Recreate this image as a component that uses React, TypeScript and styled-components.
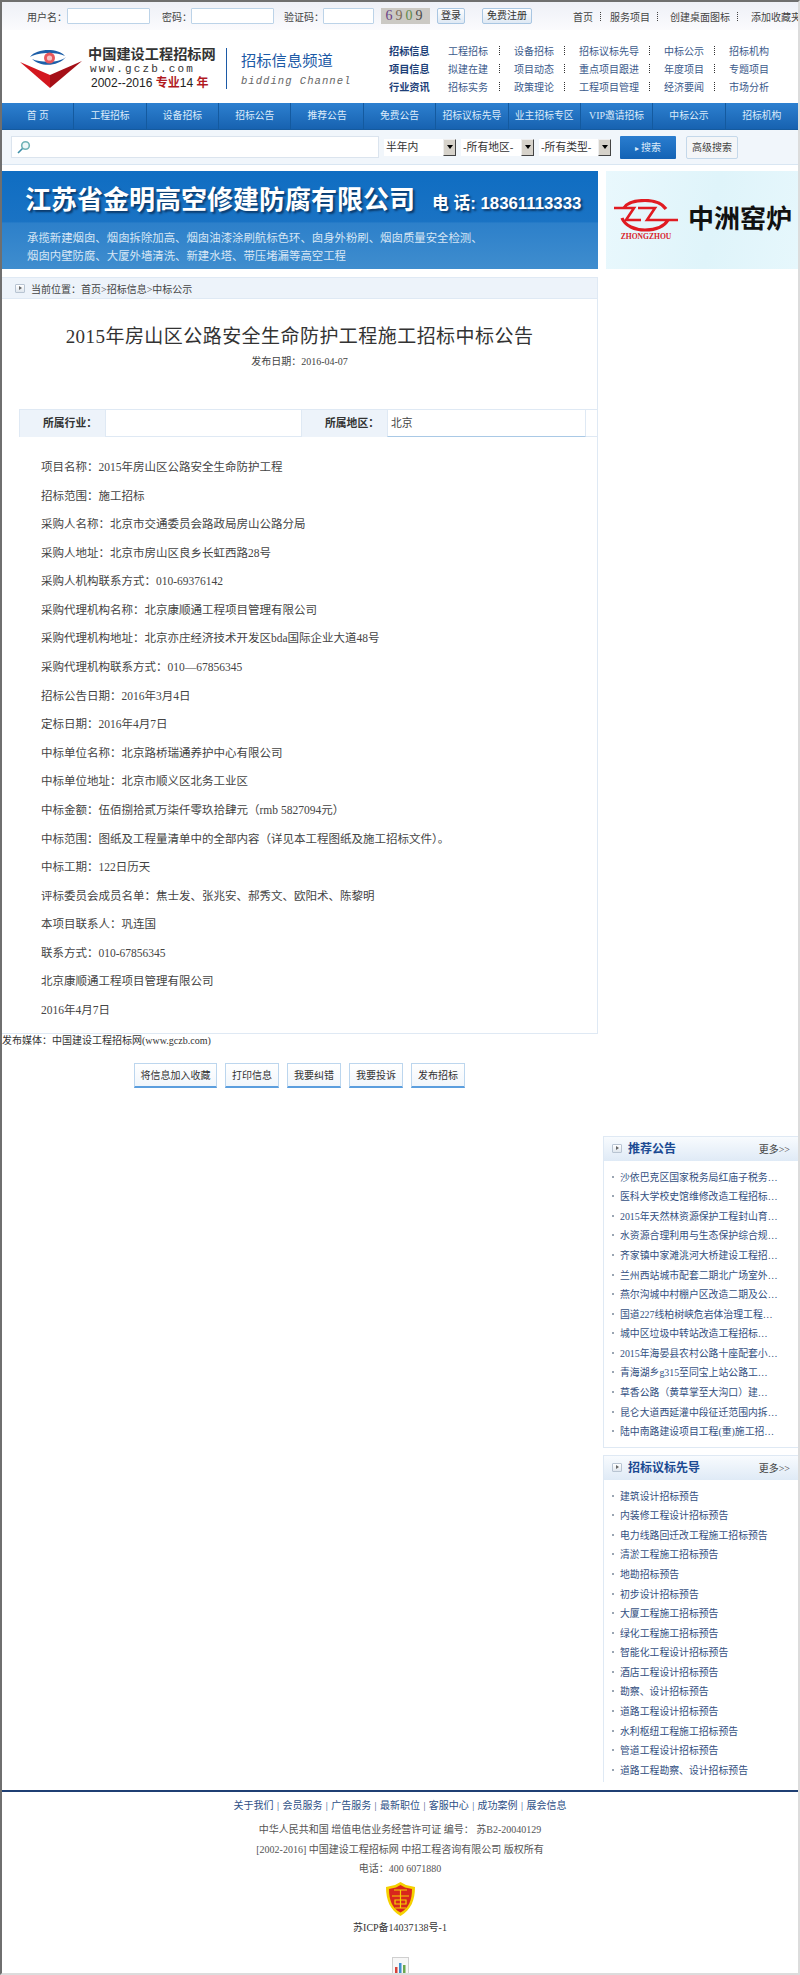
import React from 'react';
import styled, { createGlobalStyle } from 'styled-components';

const FONT = '"Liberation Serif", "Noto Sans CJK SC", serif';

const GlobalStyle = createGlobalStyle`
  html, body {
    margin: 0;
    padding: 0;
    background: #fff;
    font-family: ${FONT};
    color: #444;
  }
`;

const Page = styled.div`
  width: 800px;
  height: 1975px;
  box-sizing: border-box;
  overflow: hidden;
  border-top: 2px solid #6f6f6f;
  border-left: 2px solid #6f6f6f;
  border-right: 2px solid #dcdcdc;
  border-bottom: 2px solid #dcdcdc;
`;

const LoginBar = styled.div`
  height: 28px;
  display: flex;
  align-items: center;
  padding-left: 25px;
  background: linear-gradient(#eef0f7, #fbfbfd);
  font-size: 10px;
  color: #444;
  white-space: nowrap;
`;

const LoginLabel = styled.span<{ $w: number }>`
  width: ${(p) => p.$w}px;
  flex: none;
`;

const LoginInput = styled.input<{ $w: number; $after: number }>`
  width: ${(p) => p.$w}px;
  height: 16px;
  flex: none;
  box-sizing: border-box;
  padding: 0;
  margin-right: ${(p) => p.$after}px;
  background: #fff;
  border: 1px solid #bcd3e8;
  border-radius: 1px;
`;

const Captcha = styled.span`
  width: 49px;
  height: 16px;
  flex: none;
  margin-right: 7px;
  background: #cbc9c4;
  font-size: 14px;
  letter-spacing: 3px;
  line-height: 16px;
  text-align: center;
`;

const CaptchaDigit = styled.span<{ $c: string }>`
  color: ${(p) => p.$c};
`;

const LoginButton = styled.span<{ $w: number; $after: number }>`
  width: ${(p) => p.$w}px;
  height: 16px;
  flex: none;
  box-sizing: border-box;
  margin-right: ${(p) => p.$after}px;
  border: 1px solid #a9c6e2;
  border-radius: 2px;
  background: linear-gradient(#fdfdfe, #dfe9f4);
  line-height: 14px;
  text-align: center;
  color: #333;
`;

const QuickLink = styled.span`
  flex: none;
`;

const QuickSep = styled.i<{ $after: number }>`
  width: 1px;
  height: 9px;
  flex: none;
  margin: 0 ${(p) => p.$after}px 0 7px;
  border-left: 1px dotted #444;
`;

const LogoBand = styled.div`
  height: 73px;
  display: flex;
  align-items: flex-start;
  background: #fff;
`;

const LogoMark = styled.svg`
  width: 68px;
  height: 44px;
  flex: none;
  margin: 17px 0 0 13px;
`;

const SiteName = styled.div`
  width: 138px;
  flex: none;
  margin: 16px 0 0 5px;
`;

const SiteTitle = styled.div`
  font-size: 14.2px;
  font-weight: 700;
  line-height: 17px;
  color: #333;
  white-space: nowrap;
`;

const SiteUrl = styled.div`
  margin-left: 2px;
  font: 11px/13px "Liberation Mono", monospace;
  letter-spacing: 2.15px;
  color: #333;
`;

const SiteYears = styled.div`
  margin-left: 3px;
  font: 12px/15px "Liberation Sans", "Noto Sans CJK SC", sans-serif;
  color: #222;
  white-space: nowrap;
  b {
    color: #b11a1f;
  }
`;

const ChannelDivider = styled.div`
  width: 1px;
  height: 41px;
  flex: none;
  margin-top: 18px;
  background: #1c5aa6;
`;

const Channel = styled.div`
  width: 148px;
  flex: none;
  margin: 21px 0 0 14px;
`;

const ChannelTitle = styled.div`
  font-size: 15.3px;
  line-height: 20px;
  color: #1c5aa6;
`;

const ChannelSub = styled.div`
  margin-top: 3px;
  font: italic 10.6px/14px "Liberation Mono", monospace;
  letter-spacing: 1px;
  color: #666;
`;

const LinkGrid = styled.div`
  display: grid;
  grid-template-columns: 59px 66px 65px 85px 65px auto;
  grid-auto-rows: 18px;
  margin-top: 11px;
  font-size: 10px;
  align-items: center;
`;

const LinkHead = styled.b`
  font-size: 10.2px;
  color: #1d3f78;
`;

const LinkCell = styled.span`
  display: flex;
  justify-content: space-between;
  align-items: center;
  padding-right: 13px;
  color: #3b5a8c;
  white-space: nowrap;
  &:last-child {
    padding-right: 0;
  }
`;

const LinkSep = styled.i`
  width: 1px;
  height: 9px;
  border-left: 1px dotted #333;
`;

const Nav = styled.div`
  height: 27px;
  display: grid;
  grid-template-columns: repeat(11, 1fr);
  background: linear-gradient(#2d80d0, #1762b0);
  border-bottom: 1px solid #155a9e;
  box-sizing: border-box;
`;

const NavItem = styled.div`
  border-right: 1px solid #145a9f;
  font-size: 9.8px;
  line-height: 26px;
  text-align: center;
  color: #dcebfa;
  white-space: nowrap;
  &:last-child {
    border-right: 0;
  }
`;

const SearchBar = styled.div`
  height: 35px;
  box-sizing: border-box;
  display: flex;
  align-items: center;
  padding-left: 9px;
  background: #f1f6fb;
  border-bottom: 1px solid #d9e6f2;
`;

const SearchBox = styled.div`
  width: 368px;
  height: 22px;
  flex: none;
  box-sizing: border-box;
  display: flex;
  align-items: center;
  padding-left: 4px;
  margin-right: 5px;
  background: #fff;
  border: 1px solid #dbe4ee;
`;

const SelectBox = styled.div<{ $w: number; $after: number }>`
  width: ${(p) => p.$w}px;
  height: 17px;
  flex: none;
  box-sizing: border-box;
  display: flex;
  justify-content: space-between;
  margin-right: ${(p) => p.$after}px;
  padding-left: 2px;
  background: #fff;
  font-size: 10.8px;
  line-height: 16px;
  color: #333;
  white-space: nowrap;
`;

const SelectArrow = styled.span`
  width: 13px;
  height: 17px;
  flex: none;
  box-sizing: border-box;
  display: flex;
  align-items: center;
  justify-content: center;
  background: #d6d2ca;
  border: 1px solid;
  border-color: #eee #444 #444 #eee;
  &::after {
    content: '';
    border: 3px solid transparent;
    border-top: 4px solid #000;
    border-bottom: 0;
  }
`;

const SearchButton = styled.div`
  width: 56px;
  height: 23px;
  flex: none;
  margin: 0 10px 0 2px;
  border-radius: 1px;
  background: linear-gradient(#2a7dcf, #1363b5);
  font-size: 10px;
  line-height: 24px;
  text-align: center;
  color: #dcebfa;
  &::before {
    content: '▸ ';
    font-size: 8px;
  }
`;

const AdvancedButton = styled.div`
  width: 52px;
  height: 23px;
  flex: none;
  box-sizing: border-box;
  border: 1px solid #c4d8ea;
  border-radius: 2px;
  background: #f4f6f8;
  font-size: 10px;
  line-height: 22px;
  text-align: center;
  color: #444;
`;

const Main = styled.div`
  display: flex;
  height: 1619px;
  margin-top: 6px;
`;

const LeftColumn = styled.div`
  width: 596px;
  flex: none;
`;

const RightColumn = styled.div`
  width: 195px;
  flex: none;
  margin-left: 5px;
`;

const Banner = styled.div`
  height: 98px;
  margin-bottom: 8px;
  box-sizing: border-box;
  padding: 10px 0 0 23px;
  background: linear-gradient(#0f6dc2 0, #1a73c4 52%, #2d80ca 53%, #3f8dce 100%);
  color: #fff;
`;

const BannerHead = styled.div`
  display: flex;
  align-items: baseline;
  white-space: nowrap;
  text-shadow: 2px 2px 2px #0b3a6b;
`;

const BannerName = styled.span`
  font-size: 26px;
  font-weight: 700;
  line-height: 40px;
`;

const BannerPhone = styled.span`
  margin-left: 17px;
  font: 700 16.8px/40px "Liberation Sans", "Noto Sans CJK SC", sans-serif;
`;

const BannerText = styled.div`
  margin: 5px 0 0 2px;
  font-size: 11.4px;
  line-height: 18px;
  color: #d6e6f5;
  white-space: nowrap;
`;

const Crumbs = styled.div`
  height: 22px;
  box-sizing: border-box;
  display: flex;
  align-items: center;
  padding-left: 13px;
  background: #edf3fa;
  border: 1px solid #dfe9f4;
  border-width: 1px 1px 1px 0;
  font-size: 10px;
  color: #444;
`;

const ArrowIcon = styled.span`
  width: 10px;
  height: 9px;
  flex: none;
  box-sizing: border-box;
  display: inline-flex;
  align-items: center;
  justify-content: center;
  margin-right: 6px;
  background: linear-gradient(#fff, #dfe6ee);
  border: 1px solid #b8c4d2;
  border-radius: 1px;
  &::after {
    content: '';
    border: 2px solid transparent;
    border-left: 3px solid #666;
    border-right: 0;
  }
`;

const Article = styled.div`
  box-sizing: border-box;
  height: 735px;
  padding-top: 23px;
  border-right: 1px solid #dfe9f4;
  border-bottom: 1px solid #dfe9f4;
`;

const Title = styled.h1`
  margin: 0;
  font-size: 19px;
  font-weight: 400;
  line-height: 30px;
  letter-spacing: 0.45px;
  text-align: center;
  color: #333;
`;

const PublishDate = styled.div`
  margin-top: 2px;
  font-size: 10px;
  line-height: 16px;
  text-align: center;
  color: #444;
`;

const MetaTable = styled.div`
  display: grid;
  grid-template-columns: 85px 197px 85px 199px;
  height: 28px;
  margin: 39px 0 0 17px;
  box-sizing: border-box;
  border: 1px solid #dfe9f4;
  border-right: 0;
`;

const MetaLabel = styled.b`
  background: #edf3fa;
  font-size: 10.8px;
  line-height: 26px;
  text-align: right;
  padding-right: 8px;
  color: #333;
`;

const MetaValue = styled.span<{ $underline?: boolean }>`
  padding-left: 3px;
  font-size: 10.8px;
  line-height: 26px;
  border-left: 1px solid #dfe9f4;
  border-right: 1px solid #dfe9f4;
  border-bottom: ${(p) => (p.$underline ? '1px solid #a9c9e6' : '0')};
  color: #444;
`;

const Body = styled.div`
  margin: 16px 0 0 39px;
`;

const Para = styled.p`
  margin: 0;
  font-size: 11.5px;
  line-height: 28.58px;
  color: #444;
  white-space: nowrap;
`;

const SourceLine = styled.div`
  font-size: 10px;
  line-height: 14px;
  color: #333;
`;

const ActionRow = styled.div`
  display: flex;
  gap: 8px;
  margin: 15px 0 0 132px;
`;

const ActionButton = styled.div<{ $w: number }>`
  width: ${(p) => p.$w}px;
  height: 25px;
  box-sizing: border-box;
  background: linear-gradient(#fff, #f1f6fb);
  border: 1px solid #bcd6ee;
  border-bottom: 2px solid #5b9ede;
  font-size: 10px;
  line-height: 23px;
  text-align: center;
  color: #333;
`;

const SideAd = styled.div`
  width: 192px;
  height: 98px;
  margin-left: 3px;
  display: flex;
  flex-direction: column;
  justify-content: center;
  background: linear-gradient(100deg, #e9f8fd, #dff4fa 55%, #e6f7fc);
`;

const AdRow = styled.div`
  display: flex;
  align-items: center;
  padding-left: 8px;
`;

const AdLogo = styled.div`
  width: 64px;
  flex: none;
  text-align: center;
  font-size: 7.6px;
  font-weight: 700;
  line-height: 9px;
  color: #d8232a;
`;

const AdMark = styled.svg`
  display: block;
  width: 64px;
  height: 33px;
`;

const AdName = styled.div`
  margin-left: 10px;
  font-size: 26px;
  font-weight: 700;
  line-height: 30px;
  color: #111;
  white-space: nowrap;
`;

const SideBox = styled.div<{ $top: number; $h: number; $closed?: boolean }>`
  height: ${(p) => p.$h}px;
  box-sizing: border-box;
  margin-top: ${(p) => p.$top}px;
  border: 1px solid #dfe9f4;
  border-right: 0;
  border-bottom: ${(p) => (p.$closed ? '1px solid #dfe9f4' : '0')};
`;

const SideHead = styled.div`
  height: 24px;
  box-sizing: border-box;
  display: flex;
  align-items: center;
  padding: 0 8px 2px 8px;
  background: linear-gradient(#f8fbfe, #dfeaf6);
`;

const SideTitle = styled.b`
  flex: 1;
  font-size: 12px;
  color: #1b4a92;
`;

const SideMore = styled.span`
  font-size: 10px;
  color: #444;
`;

const SideList = styled.ul`
  list-style: none;
  margin: 0;
  padding: 6px 0 0 8px;
`;

const SideItem = styled.li`
  display: flex;
  align-items: center;
  height: 19.57px;
  font-size: 9.85px;
  color: #33507f;
  white-space: nowrap;
  &::before {
    content: '';
    width: 2px;
    height: 2px;
    margin-right: 6px;
    background: #9aa5b2;
  }
`;

const Footer = styled.div`
  border-top: 2px solid #1f3f73;
  padding-top: 6px;
  text-align: center;
  font-size: 10px;
  color: #555;
`;

const FooterLinks = styled.div`
  line-height: 16px;
  margin-bottom: 6px;
  word-spacing: 0.9px;
  color: #2d4f86;
`;

const FooterLine = styled.div`
  line-height: 19.5px;
`;

const FooterBadge = styled.svg`
  display: block;
  width: 29px;
  height: 34px;
  margin: 3px auto 4px;
`;

const FooterIcp = styled.div`
  line-height: 16px;
  color: #333;
`;

const StatIcon = styled.svg`
  display: block;
  width: 17px;
  height: 17px;
  margin: 21px auto 0;
`;

const captchaDigits = [
  { d: '6', c: '#6a3f86' },
  { d: '9', c: '#7a6a55' },
  { d: '0', c: '#5f8a4a' },
  { d: '9', c: '#4a4a4a' },
];

const quickLinks = [
  { text: '首页', after: 8 },
  { text: '服务项目', after: 11 },
  { text: '创建桌面图标', after: 12 },
  { text: '添加收藏夹', after: 0 },
];

const linkRows = [
  ['招标信息', '工程招标', '设备招标', '招标议标先导', '中标公示', '招标机构'],
  ['项目信息', '拟建在建', '项目动态', '重点项目跟进', '年度项目', '专题项目'],
  ['行业资讯', '招标实务', '政策理论', '工程项目管理', '经济要闻', '市场分析'],
];

const navItems = [
  '首 页', '工程招标', '设备招标', '招标公告', '推荐公告', '免费公告',
  '招标议标先导', '业主招标专区', 'VIP邀请招标', '中标公示', '招标机构',
];

const paragraphs = [
  '项目名称：2015年房山区公路安全生命防护工程',
  '招标范围：施工招标',
  '采购人名称：北京市交通委员会路政局房山公路分局',
  '采购人地址：北京市房山区良乡长虹西路28号',
  '采购人机构联系方式：010-69376142',
  '采购代理机构名称：北京康顺通工程项目管理有限公司',
  '采购代理机构地址：北京亦庄经济技术开发区bda国际企业大道48号',
  '采购代理机构联系方式：010—67856345',
  '招标公告日期：2016年3月4日',
  '定标日期：2016年4月7日',
  '中标单位名称：北京路桥瑞通养护中心有限公司',
  '中标单位地址：北京市顺义区北务工业区',
  '中标金额：伍佰捌拾贰万柒仟零玖拾肆元（rmb 5827094元）',
  '中标范围：图纸及工程量清单中的全部内容（详见本工程图纸及施工招标文件）。',
  '中标工期：122日历天',
  '评标委员会成员名单：焦士发、张兆安、郝秀文、欧阳术、陈黎明',
  '本项目联系人：巩连国',
  '联系方式：010-67856345',
  '北京康顺通工程项目管理有限公司',
  '2016年4月7日',
];

const actions = [
  { text: '将信息加入收藏', w: 83 },
  { text: '打印信息', w: 54 },
  { text: '我要纠错', w: 54 },
  { text: '我要投诉', w: 54 },
  { text: '发布招标', w: 54 },
];

const recommended = [
  '沙依巴克区国家税务局红庙子税务…',
  '医科大学校史馆维修改造工程招标…',
  '2015年天然林资源保护工程封山育…',
  '水资源合理利用与生态保护综合规…',
  '齐家镇中家滩洮河大桥建设工程招…',
  '兰州西站城市配套二期北广场室外…',
  '燕尔沟城中村棚户区改造二期及公…',
  '国道227线柏树峡危岩体治理工程…',
  '城中区垃圾中转站改造工程招标…',
  '2015年海晏县农村公路十座配套小…',
  '青海湖乡g315至同宝上站公路工…',
  '草香公路（黄草掌至大沟口）建…',
  '昆仑大道西延灌中段征迁范围内拆…',
  '陆中南路建设项目工程(重)施工招…',
];

const pioneers = [
  '建筑设计招标预告',
  '内装修工程设计招标预告',
  '电力线路回迁改工程施工招标预告',
  '清淤工程施工招标预告',
  '地勘招标预告',
  '初步设计招标预告',
  '大厦工程施工招标预告',
  '绿化工程施工招标预告',
  '智能化工程设计招标预告',
  '酒店工程设计招标预告',
  '勘察、设计招标预告',
  '道路工程设计招标预告',
  '水利枢纽工程施工招标预告',
  '管道工程设计招标预告',
  '道路工程勘察、设计招标预告',
];

const footerLinks = '关于我们 | 会员服务 | 广告服务 | 最新职位 | 客服中心 | 成功案例 | 展会信息';

const SideSection = ({ title, items, top, h, closed }: { title: string; items: string[]; top: number; h: number; closed?: boolean }) => (
  <SideBox $top={top} $h={h} $closed={closed}>
    <SideHead>
      <ArrowIcon />
      <SideTitle>{title}</SideTitle>
      <SideMore>更多&gt;&gt;</SideMore>
    </SideHead>
    <SideList>
      {items.map((item) => (
        <SideItem key={item}>{item}</SideItem>
      ))}
    </SideList>
  </SideBox>
);

const App = () => {
  return (
    <Page>
      <GlobalStyle />
      <LoginBar>
        <LoginLabel $w={40}>用户名：</LoginLabel>
        <LoginInput $w={83} $after={12} />
        <LoginLabel $w={29}>密码：</LoginLabel>
        <LoginInput $w={83} $after={10} />
        <LoginLabel $w={39}>验证码：</LoginLabel>
        <LoginInput $w={51} $after={7} />
        <Captcha>
          {captchaDigits.map((item, i) => (
            <CaptchaDigit key={i} $c={item.c}>{item.d}</CaptchaDigit>
          ))}
        </Captcha>
        <LoginButton $w={28} $after={17}>登录</LoginButton>
        <LoginButton $w={50} $after={41}>免费注册</LoginButton>
        {quickLinks.map((q, i) => (
          <React.Fragment key={q.text}>
            <QuickLink>{q.text}</QuickLink>
            {i < quickLinks.length - 1 && <QuickSep $after={q.after} />}
          </React.Fragment>
        ))}
      </LoginBar>

      <LogoBand>
        <LogoMark viewBox="0 0 68 44">
          <path d="M5 15 L35 28 L35 41 Z" fill="#d3171f" />
          <path d="M67 14 L35 28 L35 41 Z" fill="#a50f17" />
          <path d="M15 10 C22 1 43 1 50 9 C42 5 24 5 15 10 Z" fill="#1d5fa8" />
          <path d="M17 12 C25 20 43 20 51 10 C44 16 26 16 17 12 Z" fill="#1d5fa8" />
          <circle cx="34.5" cy="11" r="5.5" fill="#e8575c" />
          <circle cx="34.5" cy="11" r="2.6" fill="#f6c2c4" />
        </LogoMark>
        <SiteName>
          <SiteTitle>中国建设工程招标网</SiteTitle>
          <SiteUrl>www.gczb.com</SiteUrl>
          <SiteYears>2002--2016 <b>专业</b>14 <b>年</b></SiteYears>
        </SiteName>
        <ChannelDivider />
        <Channel>
          <ChannelTitle>招标信息频道</ChannelTitle>
          <ChannelSub>bidding Channel</ChannelSub>
        </Channel>
        <LinkGrid>
          {linkRows.map((row) =>
            row.map((cell, i) =>
              i === 0 ? (
                <LinkHead key={cell}>{cell}</LinkHead>
              ) : (
                <LinkCell key={cell}>
                  {cell}
                  {i < 5 && <LinkSep />}
                </LinkCell>
              ),
            ),
          )}
        </LinkGrid>
      </LogoBand>

      <Nav>
        {navItems.map((item) => (
          <NavItem key={item}>{item}</NavItem>
        ))}
      </Nav>

      <SearchBar>
        <SearchBox>
          <svg width="15" height="15" viewBox="0 0 15 15">
            <circle cx="9.5" cy="5.5" r="3.8" fill="#eef8f8" stroke="#6fb3b5" strokeWidth="1.6" />
            <path d="M6.5 8.5 L2 13" stroke="#3d8fa8" strokeWidth="1.6" />
          </svg>
        </SearchBox>
        <SelectBox $w={72} $after={5}>半年内<SelectArrow /></SelectBox>
        <SelectBox $w={73} $after={5}>-所有地区-<SelectArrow /></SelectBox>
        <SelectBox $w={72} $after={7}>-所有类型-<SelectArrow /></SelectBox>
        <SearchButton>搜索</SearchButton>
        <AdvancedButton>高级搜索</AdvancedButton>
      </SearchBar>

      <Main>
        <LeftColumn>
          <Banner>
            <BannerHead>
              <BannerName>江苏省金明高空修建防腐有限公司</BannerName>
              <BannerPhone>电 话: 18361113333</BannerPhone>
            </BannerHead>
            <BannerText>
              承揽新建烟囱、烟囱拆除加高、烟囱油漆涂刷航标色环、囱身外粉刷、烟囱质量安全检测、
              <br />
              烟囱内壁防腐、大厦外墙清洗、新建水塔、带压堵漏等高空工程
            </BannerText>
          </Banner>
          <Crumbs>
            <ArrowIcon />
            当前位置：首页&gt;招标信息&gt;中标公示
          </Crumbs>
          <Article>
            <Title>2015年房山区公路安全生命防护工程施工招标中标公告</Title>
            <PublishDate>发布日期：2016-04-07</PublishDate>
            <MetaTable>
              <MetaLabel>所属行业：</MetaLabel>
              <MetaValue />
              <MetaLabel>所属地区：</MetaLabel>
              <MetaValue $underline>北京</MetaValue>
            </MetaTable>
            <Body>
              {paragraphs.map((p) => (
                <Para key={p}>{p}</Para>
              ))}
            </Body>
          </Article>
          <SourceLine>发布媒体：中国建设工程招标网(www.gczb.com)</SourceLine>
          <ActionRow>
            {actions.map((a) => (
              <ActionButton key={a.text} $w={a.w}>{a.text}</ActionButton>
            ))}
          </ActionRow>
        </LeftColumn>

        <RightColumn>
          <SideAd>
            <AdRow>
              <AdLogo>
                <AdMark viewBox="0 0 64 33">
                  <path d="M10 9 C14 2 24 1.5 31 1.5 C40 1.5 48 4 52 10" fill="none" stroke="#e01b22" strokeWidth="3.2" />
                  <path d="M8 19 C11 27 21 31 31 31 C41 31 50 28 54 21" fill="none" stroke="#e01b22" strokeWidth="3.2" />
                  <path d="M0 9 H20 L12 21 H27 M24 9 H41 L33 21 H64" fill="none" stroke="#e01b22" strokeWidth="2.6" />
                </AdMark>
                ZHONGZHOU
              </AdLogo>
              <AdName>中洲窑炉</AdName>
            </AdRow>
          </SideAd>
          <SideSection title="推荐公告" items={recommended} top={867} h={312} closed />
          <SideSection title="招标议标先导" items={pioneers} top={7} h={327} />
        </RightColumn>
      </Main>

      <Footer>
        <FooterLinks>{footerLinks}</FooterLinks>
        <FooterLine>中华人民共和国 增值电信业务经营许可证 编号： 苏B2-20040129</FooterLine>
        <FooterLine>[2002-2016] 中国建设工程招标网 中招工程咨询有限公司 版权所有</FooterLine>
        <FooterLine>电话：400 6071880</FooterLine>
        <FooterBadge viewBox="0 0 29 34">
          <path d="M14.5 0 L20 3 L29 5 C29 18 25 28 14.5 34 C4 28 0 18 0 5 L9 3 Z" fill="#f5d000" />
          <path d="M14.5 3 L19 5.5 L26 7 C26 18 23 26 14.5 30.5 C6 26 3 18 3 7 L10 5.5 Z" fill="#d8261d" />
          <path d="M8 8 H21 M14.5 8 V14 M6 14 H23 M9 18 H20 V22 H9 Z M14.5 14 V26 M9 26 L20 26" stroke="#f5d000" strokeWidth="1.2" fill="none" />
        </FooterBadge>
        <FooterIcp>苏ICP备14037138号-1</FooterIcp>
        <StatIcon viewBox="0 0 17 17">
          <rect x="0.5" y="0.5" width="16" height="16.5" fill="#f7f7f7" stroke="#cfcfcf" />
          <rect x="3" y="10" width="2.5" height="7" fill="#d8433b" />
          <rect x="7" y="6" width="2.5" height="11" fill="#3f8fd0" />
          <rect x="11" y="8" width="2.5" height="9" fill="#6aa84f" />
        </StatIcon>
      </Footer>
    </Page>
  );
};

export default App;
